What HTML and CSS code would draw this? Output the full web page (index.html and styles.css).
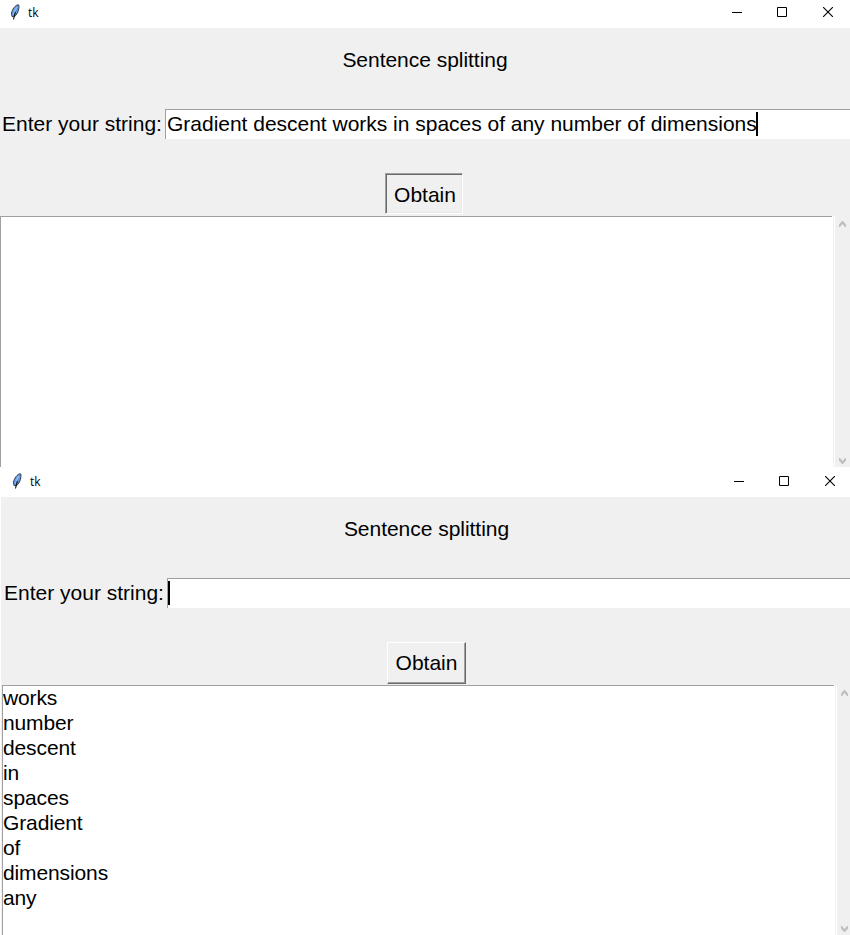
FILE: index.html
```html
<!DOCTYPE html>
<html lang="en">
<head>
<meta charset="utf-8">
<title>tk</title>
<link rel="stylesheet" href="styles.css">
</head>
<body>
<svg class="defs" width="0" height="0" aria-hidden="true">
  <symbol id="feather" viewBox="0 0 10 17">
    <path d="M2 12.500C.6 10 2 5.500 5 2.500C6.500 1 8.300.3 8.800 1C9.400 4 8.300 8.500 6 11.200C5 12.500 3.300 12.800 2 12.500Z" fill="#5c96dc" stroke="#3a4352" stroke-width="1"/>
    <path d="M7 3C5.200 5 4 7.500 3.500 10.500" fill="none" stroke="#8fbcf0" stroke-width="1.500"/>
    <path d="M5.500 8C4.500 10.500 4 13 3.500 15.500" fill="none" stroke="#10141c" stroke-width="1.100"/>
  </symbol>
  <symbol id="min" viewBox="0 0 10 10"><path d="M0 5.500H10" stroke="#000"/></symbol>
  <symbol id="max" viewBox="0 0 10 10"><path d="M.5.5H9.500V9.500H.5Z" fill="none" stroke="#000"/></symbol>
  <symbol id="close" viewBox="0 0 10 10"><path d="M0 0L10 10M10 0L0 10" stroke="#000" stroke-width="1.100"/></symbol>
  <symbol id="up" viewBox="0 0 7 6"><path d="M0 3.500L3 0H4L7 3.500V6H6L3.500 3L1 6H0Z" fill="#bfbfbf"/></symbol>
  <symbol id="down" viewBox="0 0 7 6"><path d="M0 2.500L3 6H4L7 2.500V0H6L3.500 3L1 0H0Z" fill="#bfbfbf"/></symbol>
</svg>

<section class="window first">
  <header class="titlebar">
    <svg class="feather"><use href="#feather"/></svg>
    <span class="name">tk</span>
    <div class="controls">
      <svg><use href="#min"/></svg><svg><use href="#max"/></svg><svg><use href="#close"/></svg>
    </div>
  </header>
  <main class="client">
    <h1>Sentence splitting</h1>
    <div class="field">
      <span class="label">Enter your string:</span>
      <div class="entry"><span class="value">Gradient descent works in spaces of any number of dimensions</span><i class="caret"></i></div>
    </div>
    <button class="pressed">Obtain</button>
    <div class="output">
      <ul class="list"></ul>
      <div class="scrollbar"><svg><use href="#up"/></svg><svg><use href="#down"/></svg></div>
    </div>
  </main>
</section>

<section class="window second">
  <header class="titlebar">
    <svg class="feather"><use href="#feather"/></svg>
    <span class="name">tk</span>
    <div class="controls">
      <svg><use href="#min"/></svg><svg><use href="#max"/></svg><svg><use href="#close"/></svg>
    </div>
  </header>
  <main class="client">
    <h1>Sentence splitting</h1>
    <div class="field">
      <span class="label">Enter your string:</span>
      <div class="entry"><i class="caret"></i></div>
    </div>
    <button>Obtain</button>
    <div class="output">
      <ul class="list">
        <li>works</li><li>number</li><li>descent</li><li>in</li><li>spaces</li><li>Gradient</li><li>of</li><li>dimensions</li><li>any</li>
      </ul>
      <div class="scrollbar"><svg><use href="#up"/></svg><svg><use href="#down"/></svg></div>
    </div>
  </main>
</section>
</body>
</html>
```

FILE: styles.css
```css
* { box-sizing: border-box; margin: 0; padding: 0; }
html, body { width: 850px; height: 935px; overflow: hidden; }
body {
  background: #fff;
  color: #000;
  font: 21px/25px "Liberation Sans", Arial, sans-serif;
}
.defs { position: absolute; }
svg { display: block; }

.window { width: 850px; overflow: hidden; display: flex; flex-direction: column; }
.first { height: 467px; }
.second { height: 468px; padding-left: 1px; }

.titlebar {
  flex: none;
  height: 28px;
  display: flex;
  align-items: flex-start;
  padding: 4px 17px 0 10px;
}
.second .titlebar { height: 30px; padding: 6px 15px 0 11px; }
.feather { width: 10px; height: 17px; }
.name {
  margin: 1px 0 0 8px;
  font: 12px/16px "Open Sans", "Noto Sans", sans-serif;
}
.controls { display: flex; margin: 3px 0 0 auto; }
.controls svg { width: 10px; height: 10px; }
.controls svg:nth-child(2) { margin: 0 36px 0 35px; }

.client {
  flex: 1;
  min-height: 0;
  background: #f0f0f0;
  display: flex;
  flex-direction: column;
  align-items: center;
}
h1 { font-size: 21px; font-weight: 400; line-height: 25px; letter-spacing: -0.03px; margin-top: 19px; white-space: nowrap; }
.second h1 { padding-left: 2px; }

.field { align-self: stretch; display: flex; margin-top: 37px; height: 30px; }
.label { width: 165px; padding: 2px 0 0 2px; white-space: nowrap; flex: none; }
.second .label { width: 166px; padding-left: 3px; }
.entry {
  flex: 1;
  display: flex;
  align-items: flex-start;
  background: #fff;
  border-top: 1px solid #a0a0a0;
  border-left: 1px solid #a0a0a0;
  padding: 1px 0 0 1px;
}
.second .entry { padding-left: 0; }
.value { white-space: nowrap; width: 589px; letter-spacing: -0.015px; }
.caret { width: 2px; height: 24px; margin-top: 1px; background: #000; }

button {
  width: 79px;
  height: 42px;
  margin: 34px 0 0 2px;
  padding-bottom: 2px;
  font: inherit;
  color: inherit;
  background: #f0f0f0;
  border: 1px solid;
  border-color: #fff #696969 #696969 #fff;
  box-shadow: inset -1px -1px #a0a0a0;
  flex: none;
}
.pressed {
  width: 78px;
  height: 41px;
  margin-left: -2px;
  border-color: #a0a0a0 #fff #fff #a0a0a0;
  box-shadow: inset 1px 1px #696969, inset -1px -1px #e8e8e8;
  padding: 2px 0 0 2px;
}

.output { align-self: stretch; flex: 1; min-height: 0; display: flex; margin-top: 2px; }
.second .output { margin-top: 1px; padding-left: 1px; }
.list {
  width: 832px;
  list-style: none;
  line-height: 25px;
  letter-spacing: -0.12px;
  background: #fff;
  border-top: 1px solid #a0a0a0;
  border-left: 1px solid #a0a0a0;
  overflow: hidden;
}
.list li { height: 25px; line-height: 23px; }
.scrollbar {
  flex: 1;
  border-left: 1px solid #fff;
  box-shadow: inset 1px 0 #f0f0f0, inset 2px 0 #fff;
  display: flex;
  flex-direction: column;
  justify-content: space-between;
  padding: 5px 0 3px 6px;
}
.scrollbar svg { width: 7px; height: 6px; }
```
